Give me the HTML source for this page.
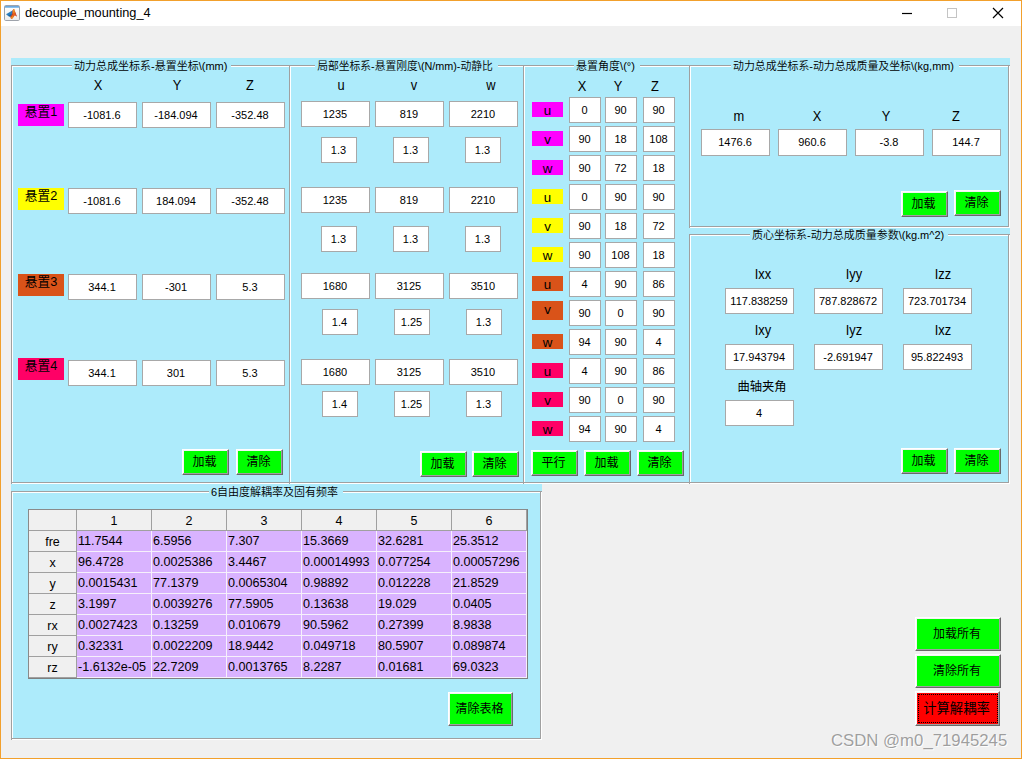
<!DOCTYPE html><html lang="zh"><head><meta charset="utf-8"><title>decouple_mounting_4</title><style>
*{box-sizing:border-box;margin:0;padding:0}
html,body{width:1022px;height:759px;overflow:hidden;background:#f0f0f0}
body{position:relative;font-family:"Liberation Sans","Noto Sans CJK SC",sans-serif;color:#000}
.a{position:absolute}
#win{position:absolute;left:0;top:0;width:1022px;height:759px;border:1px solid #f2a02c;background:#f0f0f0}
#tb{position:absolute;left:1px;top:1px;width:1020px;height:25px;background:#fff}
#title{position:absolute;left:25px;top:1px;height:25px;line-height:24px;font-size:12.77px;white-space:nowrap;color:#000}
.bg{position:absolute;background:#adebfb}
.eg{position:absolute;border:1px solid #a0a0a0}
.ew{position:absolute;border:1px solid #fff}
.pt{position:absolute;background:#adebfb;font-size:11px;line-height:13px;height:13px;white-space:nowrap;padding:0 2px;text-align:left;font-weight:350;font-family:"Liberation Sans","Noto Sans CJK SC",sans-serif}
.e{position:absolute;background:#fff;border:1px solid #a8a8a8;font-size:11px;text-align:center;padding-right:1px;white-space:nowrap}
.h{position:absolute;font-size:14px;line-height:16px;height:16px;text-align:center;white-space:nowrap;width:40px;margin-left:-20px;transform:scaleX(.92)}
.l{position:absolute;text-align:center;white-space:nowrap;font-size:13.33px}
.b{position:absolute;background:#00ff00;border-top:1px solid #fff;border-left:1px solid #fff;border-right:1px solid #696969;border-bottom:1px solid #696969;box-shadow:inset -1px -1px 0 #a0a0a0,inset 1px 1px 0 #f4f4f4;text-align:center;font-size:12px;white-space:nowrap;padding-right:2px;font-family:"Liberation Sans","Noto Sans CJK SC",sans-serif}
table{position:absolute;border-collapse:collapse;table-layout:fixed}
td,th{padding:0;overflow:hidden;white-space:nowrap;font-weight:normal}
th{background:#f0f0f0;border:1px solid #a0a0a0;font-size:12.5px;text-align:center;padding-top:1px}
td{background:#d9b3ff;border:1px solid #f6f0fb;font-size:12.6px;text-align:left;padding-left:1px}
</style></head><body>
<div id="win"></div><div id="tb"></div>
<svg class="a" style="left:4px;top:5px" width="16" height="16" viewBox="0 0 16 16">
<defs><linearGradient id="ig" x1="0" y1="0" x2="0" y2="1"><stop offset="0" stop-color="#ffffff"/><stop offset="1" stop-color="#ececec"/></linearGradient>
<linearGradient id="ib" x1="0" y1="0" x2="0" y2="1"><stop offset="0" stop-color="#5b9bd8"/><stop offset="1" stop-color="#9fcdf0"/></linearGradient></defs>
<rect x="0.5" y="0.5" width="15" height="15" rx="1.2" fill="url(#ig)" stroke="#9ea3ab"/>
<rect x="1" y="1" width="14" height="2" fill="url(#ib)"/>
<path d="M2 9.3 L8.5 5.4 L8.2 9 L6.3 11.7 L4.2 10.9 Z" fill="#2b7dbd"/>
<path d="M4.2 10.9 L6.3 11.7 L8.2 9 L6.2 9.6 Z" fill="#1d5f96"/>
<path d="M8.5 5.4 L9.4 3.9 L9.6 9 L7 13.8 L6.3 11.7 L8.2 9 Z" fill="#a72b1a"/>
<path d="M9.4 3.9 L10.3 4.1 L11.4 8.4 L12.2 10.5 L13 11.8 L11.5 10.5 L10.5 10.8 L8.6 13.4 L7.2 13.9 L6.8 12.4 L8.6 9.6 Z" fill="#e5601d"/>
<path d="M10.6 5.2 L13 11.8 L11.7 10.6 L11.1 8.4 Z" fill="#bf301d"/>
<path d="M9.35 4.4 L10.2 4.4 L10.35 8 L9.6 8.3 Z" fill="#f3b41f"/>
<path d="M6.9 12.6 L8.5 11 L9.2 12.3 L7.8 13.8 Z" fill="#f0921e"/>
</svg>
<div id="title">decouple_mounting_4</div>
<svg class="a" style="left:890px;top:1px" width="130" height="25" viewBox="0 0 130 25">
<path d="M12 12.5H22" stroke="#000" stroke-width="1.2"/>
<rect x="57.5" y="7.5" width="9" height="9" fill="none" stroke="#c4c4c4" stroke-width="1"/>
<path d="M103 7L113 17M113 7L103 17" stroke="#000" stroke-width="1.2"/>
</svg>
<div class="bg" style="left:11px;top:58px;width:280px;height:426px"></div>
<div class="ew" style="left:12px;top:66px;width:279px;height:418px"></div>
<div class="eg" style="left:11px;top:65px;width:279px;height:418px"></div>
<div class="a" style="left:11px;top:483px;width:1px;height:1px;background:#a0a0a0"></div><div class="a" style="left:290px;top:65px;width:1px;height:1px;background:#a0a0a0"></div>
<div class="pt" style="left:72px;top:60px;width:159px"><span style="display:inline-block;width:152px;text-align:center;font-size:11px">动力总成坐标系-悬置坐标\(mm)</span></div>
<div class="bg" style="left:289px;top:58px;width:236px;height:426px"></div>
<div class="ew" style="left:290px;top:66px;width:235px;height:418px"></div>
<div class="eg" style="left:289px;top:65px;width:235px;height:418px"></div>
<div class="a" style="left:289px;top:483px;width:1px;height:1px;background:#a0a0a0"></div><div class="a" style="left:524px;top:65px;width:1px;height:1px;background:#a0a0a0"></div>
<div class="pt" style="left:315px;top:60px;width:183px"><span style="display:inline-block;width:176px;text-align:center;font-size:10.8px">局部坐标系-悬置刚度\(N/mm)-动静比</span></div>
<div class="bg" style="left:523px;top:58px;width:168px;height:426px"></div>
<div class="ew" style="left:524px;top:66px;width:167px;height:418px"></div>
<div class="eg" style="left:523px;top:65px;width:167px;height:418px"></div>
<div class="a" style="left:523px;top:483px;width:1px;height:1px;background:#a0a0a0"></div><div class="a" style="left:690px;top:65px;width:1px;height:1px;background:#a0a0a0"></div>
<div class="pt" style="left:574px;top:60px;width:66px"><span style="display:inline-block;width:59px;text-align:center;font-size:11px">悬置角度\(°)</span></div>
<div class="bg" style="left:689px;top:58px;width:321px;height:170px"></div>
<div class="ew" style="left:690px;top:66px;width:320px;height:162px"></div>
<div class="eg" style="left:689px;top:65px;width:320px;height:162px"></div>
<div class="a" style="left:689px;top:227px;width:1px;height:1px;background:#a0a0a0"></div><div class="a" style="left:1009px;top:65px;width:1px;height:1px;background:#a0a0a0"></div>
<div class="pt" style="left:731px;top:60px;width:228px"><span style="display:inline-block;width:221px;text-align:center;font-size:10.9px">动力总成坐标系-动力总成质量及坐标\(kg,mm)</span></div>
<div class="bg" style="left:689px;top:228px;width:321px;height:256px"></div>
<div class="ew" style="left:690px;top:235px;width:320px;height:249px"></div>
<div class="eg" style="left:689px;top:234px;width:320px;height:249px"></div>
<div class="a" style="left:689px;top:483px;width:1px;height:1px;background:#a0a0a0"></div><div class="a" style="left:1009px;top:234px;width:1px;height:1px;background:#a0a0a0"></div>
<div class="pt" style="left:750px;top:229px;width:198px"><span style="display:inline-block;width:191px;text-align:center;font-size:11px">质心坐标系-动力总成质量参数\(kg.m^2)</span></div>
<div class="bg" style="left:11px;top:484px;width:531px;height:256px"></div>
<div class="ew" style="left:12px;top:492px;width:530px;height:248px"></div>
<div class="eg" style="left:11px;top:491px;width:530px;height:248px"></div>
<div class="a" style="left:11px;top:739px;width:1px;height:1px;background:#a0a0a0"></div><div class="a" style="left:541px;top:491px;width:1px;height:1px;background:#a0a0a0"></div>
<div class="pt" style="left:209px;top:486px;width:134px"><span style="display:inline-block;width:127px;text-align:center;font-size:11px">6自由度解耦率及固有频率</span></div>
<div class="h" style="left:98px;top:77px">X</div>
<div class="h" style="left:177px;top:77px">Y</div>
<div class="h" style="left:250px;top:77px">Z</div>
<div class="l" style="left:18px;top:104px;width:46px;height:22px;line-height:17px;background:#ff00ff;font-size:12.7px">悬置1</div>
<div class="e" style="left:68px;top:102px;width:69px;height:26px;line-height:24px">-1081.6</div>
<div class="e" style="left:142px;top:102px;width:69px;height:26px;line-height:24px">-184.094</div>
<div class="e" style="left:216px;top:102px;width:69px;height:26px;line-height:24px">-352.48</div>
<div class="l" style="left:18px;top:188px;width:46px;height:22px;line-height:17px;background:#ffff00;font-size:12.7px">悬置2</div>
<div class="e" style="left:68px;top:188px;width:69px;height:26px;line-height:24px">-1081.6</div>
<div class="e" style="left:142px;top:188px;width:69px;height:26px;line-height:24px">184.094</div>
<div class="e" style="left:216px;top:188px;width:69px;height:26px;line-height:24px">-352.48</div>
<div class="l" style="left:18px;top:274px;width:46px;height:22px;line-height:17px;background:#d95319;font-size:12.7px">悬置3</div>
<div class="e" style="left:68px;top:274px;width:69px;height:26px;line-height:24px">344.1</div>
<div class="e" style="left:142px;top:274px;width:69px;height:26px;line-height:24px">-301</div>
<div class="e" style="left:216px;top:274px;width:69px;height:26px;line-height:24px">5.3</div>
<div class="l" style="left:18px;top:358px;width:46px;height:22px;line-height:17px;background:#ff0066;font-size:12.7px">悬置4</div>
<div class="e" style="left:68px;top:360px;width:69px;height:26px;line-height:24px">344.1</div>
<div class="e" style="left:142px;top:360px;width:69px;height:26px;line-height:24px">301</div>
<div class="e" style="left:216px;top:360px;width:69px;height:26px;line-height:24px">5.3</div>
<div class="b" style="left:182px;top:449px;width:47px;height:26px;line-height:24px;font-size:12px">加载</div>
<div class="b" style="left:236px;top:449px;width:47px;height:26px;line-height:24px;font-size:12px">清除</div>
<div class="h" style="left:341px;top:77px">u</div>
<div class="h" style="left:414px;top:77px">v</div>
<div class="h" style="left:491px;top:77px">w</div>
<div class="e" style="left:301px;top:101px;width:69px;height:26px;line-height:24px">1235</div>
<div class="e" style="left:321px;top:137px;width:36px;height:26px;line-height:24px">1.3</div>
<div class="e" style="left:375px;top:101px;width:69px;height:26px;line-height:24px">819</div>
<div class="e" style="left:393px;top:137px;width:36px;height:26px;line-height:24px">1.3</div>
<div class="e" style="left:449px;top:101px;width:69px;height:26px;line-height:24px">2210</div>
<div class="e" style="left:465px;top:137px;width:36px;height:26px;line-height:24px">1.3</div>
<div class="e" style="left:301px;top:187px;width:69px;height:26px;line-height:24px">1235</div>
<div class="e" style="left:321px;top:226px;width:36px;height:26px;line-height:24px">1.3</div>
<div class="e" style="left:375px;top:187px;width:69px;height:26px;line-height:24px">819</div>
<div class="e" style="left:393px;top:226px;width:36px;height:26px;line-height:24px">1.3</div>
<div class="e" style="left:449px;top:187px;width:69px;height:26px;line-height:24px">2210</div>
<div class="e" style="left:465px;top:226px;width:36px;height:26px;line-height:24px">1.3</div>
<div class="e" style="left:301px;top:273px;width:69px;height:26px;line-height:24px">1680</div>
<div class="e" style="left:322px;top:309px;width:36px;height:26px;line-height:24px">1.4</div>
<div class="e" style="left:375px;top:273px;width:69px;height:26px;line-height:24px">3125</div>
<div class="e" style="left:394px;top:309px;width:36px;height:26px;line-height:24px">1.25</div>
<div class="e" style="left:449px;top:273px;width:69px;height:26px;line-height:24px">3510</div>
<div class="e" style="left:466px;top:309px;width:36px;height:26px;line-height:24px">1.3</div>
<div class="e" style="left:301px;top:359px;width:69px;height:26px;line-height:24px">1680</div>
<div class="e" style="left:322px;top:391px;width:36px;height:26px;line-height:24px">1.4</div>
<div class="e" style="left:375px;top:359px;width:69px;height:26px;line-height:24px">3125</div>
<div class="e" style="left:394px;top:391px;width:36px;height:26px;line-height:24px">1.25</div>
<div class="e" style="left:449px;top:359px;width:69px;height:26px;line-height:24px">3510</div>
<div class="e" style="left:466px;top:391px;width:36px;height:26px;line-height:24px">1.3</div>
<div class="b" style="left:420px;top:451px;width:47px;height:26px;line-height:24px;font-size:12px">加载</div>
<div class="b" style="left:472px;top:451px;width:47px;height:26px;line-height:24px;font-size:12px">清除</div>
<div class="h" style="left:582px;top:78px">X</div>
<div class="h" style="left:618px;top:78px">Y</div>
<div class="h" style="left:655px;top:78px">Z</div>
<div class="l" style="left:532px;top:102px;width:31px;height:15px;line-height:17px;background:#ff00ff;font-size:13.33px">u</div>
<div class="e" style="left:569px;top:97px;width:32px;height:26px;line-height:24px">0</div>
<div class="e" style="left:605px;top:97px;width:32px;height:26px;line-height:24px">90</div>
<div class="e" style="left:643px;top:97px;width:32px;height:26px;line-height:24px">90</div>
<div class="l" style="left:532px;top:131px;width:31px;height:15px;line-height:17px;background:#ff00ff;font-size:13.33px">v</div>
<div class="e" style="left:569px;top:126px;width:32px;height:26px;line-height:24px">90</div>
<div class="e" style="left:605px;top:126px;width:32px;height:26px;line-height:24px">18</div>
<div class="e" style="left:643px;top:126px;width:32px;height:26px;line-height:24px">108</div>
<div class="l" style="left:532px;top:160px;width:31px;height:15px;line-height:17px;background:#ff00ff;font-size:13.33px">w</div>
<div class="e" style="left:569px;top:155px;width:32px;height:26px;line-height:24px">90</div>
<div class="e" style="left:605px;top:155px;width:32px;height:26px;line-height:24px">72</div>
<div class="e" style="left:643px;top:155px;width:32px;height:26px;line-height:24px">18</div>
<div class="l" style="left:532px;top:189px;width:31px;height:15px;line-height:17px;background:#ffff00;font-size:13.33px">u</div>
<div class="e" style="left:569px;top:184px;width:32px;height:26px;line-height:24px">0</div>
<div class="e" style="left:605px;top:184px;width:32px;height:26px;line-height:24px">90</div>
<div class="e" style="left:643px;top:184px;width:32px;height:26px;line-height:24px">90</div>
<div class="l" style="left:532px;top:218px;width:31px;height:15px;line-height:17px;background:#ffff00;font-size:13.33px">v</div>
<div class="e" style="left:569px;top:213px;width:32px;height:26px;line-height:24px">90</div>
<div class="e" style="left:605px;top:213px;width:32px;height:26px;line-height:24px">18</div>
<div class="e" style="left:643px;top:213px;width:32px;height:26px;line-height:24px">72</div>
<div class="l" style="left:532px;top:247px;width:31px;height:15px;line-height:17px;background:#ffff00;font-size:13.33px">w</div>
<div class="e" style="left:569px;top:242px;width:32px;height:26px;line-height:24px">90</div>
<div class="e" style="left:605px;top:242px;width:32px;height:26px;line-height:24px">108</div>
<div class="e" style="left:643px;top:242px;width:32px;height:26px;line-height:24px">18</div>
<div class="l" style="left:532px;top:276px;width:31px;height:15px;line-height:17px;background:#d95319;font-size:13.33px">u</div>
<div class="e" style="left:569px;top:271px;width:32px;height:26px;line-height:24px">4</div>
<div class="e" style="left:605px;top:271px;width:32px;height:26px;line-height:24px">90</div>
<div class="e" style="left:643px;top:271px;width:32px;height:26px;line-height:24px">86</div>
<div class="l" style="left:532px;top:301px;width:31px;height:19px;line-height:17px;background:#d95319;font-size:13.33px">v</div>
<div class="e" style="left:569px;top:300px;width:32px;height:26px;line-height:24px">90</div>
<div class="e" style="left:605px;top:300px;width:32px;height:26px;line-height:24px">0</div>
<div class="e" style="left:643px;top:300px;width:32px;height:26px;line-height:24px">90</div>
<div class="l" style="left:532px;top:334px;width:31px;height:15px;line-height:17px;background:#d95319;font-size:13.33px">w</div>
<div class="e" style="left:569px;top:329px;width:32px;height:26px;line-height:24px">94</div>
<div class="e" style="left:605px;top:329px;width:32px;height:26px;line-height:24px">90</div>
<div class="e" style="left:643px;top:329px;width:32px;height:26px;line-height:24px">4</div>
<div class="l" style="left:532px;top:363px;width:31px;height:15px;line-height:17px;background:#ff0066;font-size:13.33px">u</div>
<div class="e" style="left:569px;top:358px;width:32px;height:26px;line-height:24px">4</div>
<div class="e" style="left:605px;top:358px;width:32px;height:26px;line-height:24px">90</div>
<div class="e" style="left:643px;top:358px;width:32px;height:26px;line-height:24px">86</div>
<div class="l" style="left:532px;top:392px;width:31px;height:15px;line-height:17px;background:#ff0066;font-size:13.33px">v</div>
<div class="e" style="left:569px;top:387px;width:32px;height:26px;line-height:24px">90</div>
<div class="e" style="left:605px;top:387px;width:32px;height:26px;line-height:24px">0</div>
<div class="e" style="left:643px;top:387px;width:32px;height:26px;line-height:24px">90</div>
<div class="l" style="left:532px;top:421px;width:31px;height:15px;line-height:17px;background:#ff0066;font-size:13.33px">w</div>
<div class="e" style="left:569px;top:416px;width:32px;height:26px;line-height:24px">94</div>
<div class="e" style="left:605px;top:416px;width:32px;height:26px;line-height:24px">90</div>
<div class="e" style="left:643px;top:416px;width:32px;height:26px;line-height:24px">4</div>
<div class="b" style="left:531px;top:450px;width:47px;height:26px;line-height:24px;font-size:12px">平行</div>
<div class="b" style="left:584px;top:450px;width:47px;height:26px;line-height:24px;font-size:12px">加载</div>
<div class="b" style="left:637px;top:450px;width:47px;height:26px;line-height:24px;font-size:12px">清除</div>
<div class="h" style="left:739px;top:108px">m</div>
<div class="h" style="left:817px;top:108px">X</div>
<div class="h" style="left:886px;top:108px">Y</div>
<div class="h" style="left:956px;top:108px">Z</div>
<div class="e" style="left:701px;top:129px;width:69px;height:27px;line-height:24px">1476.6</div>
<div class="e" style="left:778px;top:129px;width:69px;height:27px;line-height:24px">960.6</div>
<div class="e" style="left:855px;top:129px;width:69px;height:27px;line-height:24px">-3.8</div>
<div class="e" style="left:932px;top:129px;width:69px;height:27px;line-height:24px">144.7</div>
<div class="b" style="left:901px;top:191px;width:47px;height:26px;line-height:24px;font-size:12px">加载</div>
<div class="b" style="left:954px;top:190px;width:47px;height:26px;line-height:24px;font-size:12px">清除</div>
<div class="h" style="left:763px;top:266px">Ixx</div>
<div class="h" style="left:854px;top:266px">Iyy</div>
<div class="h" style="left:943px;top:266px">Izz</div>
<div class="h" style="left:763px;top:322px">Ixy</div>
<div class="h" style="left:854px;top:322px">Iyz</div>
<div class="h" style="left:943px;top:322px">Ixz</div>
<div class="e" style="left:725px;top:288px;width:69px;height:26px;line-height:24px">117.838259</div>
<div class="e" style="left:814px;top:288px;width:69px;height:26px;line-height:24px">787.828672</div>
<div class="e" style="left:903px;top:288px;width:69px;height:26px;line-height:24px">723.701734</div>
<div class="e" style="left:725px;top:344px;width:69px;height:26px;line-height:24px">17.943794</div>
<div class="e" style="left:814px;top:344px;width:69px;height:26px;line-height:24px">-2.691947</div>
<div class="e" style="left:903px;top:344px;width:69px;height:26px;line-height:24px">95.822493</div>
<div class="h" style="left:762px;top:379px;font-size:12.3px;transform:none;width:80px;margin-left:-40px">曲轴夹角</div>
<div class="e" style="left:725px;top:400px;width:69px;height:26px;line-height:24px">4</div>
<div class="b" style="left:901px;top:448px;width:47px;height:26px;line-height:24px;font-size:12px">加载</div>
<div class="b" style="left:954px;top:448px;width:47px;height:26px;line-height:24px;font-size:12px">清除</div>
<table style="left:28px;top:509px;width:499px">
<colgroup><col style="width:48px"><col style="width:75px"><col style="width:75px"><col style="width:75px"><col style="width:75px"><col style="width:75px"><col style="width:75px"></colgroup>
<tr style="height:21px"><th></th><th>1</th><th>2</th><th>3</th><th>4</th><th>5</th><th>6</th></tr>
<tr style="height:21px"><th>fre</th><td>11.7544</td><td>6.5956</td><td>7.307</td><td>15.3669</td><td>32.6281</td><td>25.3512</td></tr>
<tr style="height:21px"><th>x</th><td>96.4728</td><td>0.0025386</td><td>3.4467</td><td>0.00014993</td><td>0.077254</td><td>0.00057296</td></tr>
<tr style="height:21px"><th>y</th><td>0.0015431</td><td>77.1379</td><td>0.0065304</td><td>0.98892</td><td>0.012228</td><td>21.8529</td></tr>
<tr style="height:21px"><th>z</th><td>3.1997</td><td>0.0039276</td><td>77.5905</td><td>0.13638</td><td>19.029</td><td>0.0405</td></tr>
<tr style="height:21px"><th>rx</th><td>0.0027423</td><td>0.13259</td><td>0.010679</td><td>90.5962</td><td>0.27399</td><td>8.9838</td></tr>
<tr style="height:21px"><th>ry</th><td>0.32331</td><td>0.0022209</td><td>18.9442</td><td>0.049718</td><td>80.5907</td><td>0.089874</td></tr>
<tr style="height:21px"><th>rz</th><td>-1.6132e-05</td><td>22.7209</td><td>0.0013765</td><td>8.2287</td><td>0.01681</td><td>69.0323</td></tr>
</table>
<div class="a" style="left:28px;top:509px;width:500px;height:170px;border-right:1px solid #7f7f7f;border-bottom:1px solid #7f7f7f;border-left:1px solid #8a8a8a;border-top:1px solid #8a8a8a"></div>
<div class="b" style="left:448px;top:692px;width:65px;height:34px;line-height:32px;font-size:12px">清除表格</div>
<div class="b" style="left:915px;top:617px;width:86px;height:34px;line-height:32px;font-size:12px">加载所有</div>
<div class="b" style="left:915px;top:654px;width:86px;height:34px;line-height:32px;font-size:12px">清除所有</div>
<div class="b" style="left:915px;top:691px;width:85px;height:35px;line-height:33px;font-size:13.33px;background:#ff0000">计算解耦率</div>
<div class="a" style="left:918px;top:694px;width:80px;height:29px;border:1px dotted #000"></div>
<div class="a" style="left:831px;top:731px;font-size:16.75px;line-height:20px;color:rgba(125,125,125,.72);text-shadow:1px 1px 0 rgba(255,255,255,.9);white-space:nowrap">CSDN @m0_71945245</div>
</body></html>
